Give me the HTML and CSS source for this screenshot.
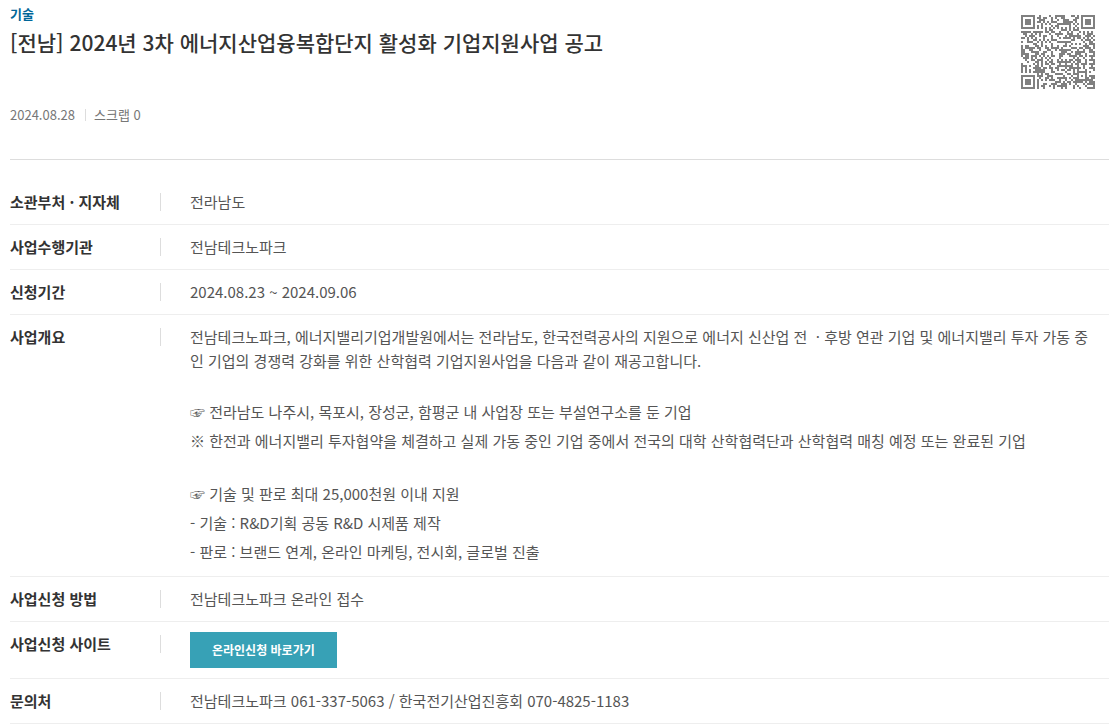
FILE: index.html
```html
<!DOCTYPE html>
<html lang="ko">
<head>
    <meta charset="UTF-8">
    <meta name="viewport" content="width=device-width, initial-scale=1.0">
    <title>2024년 3차 에너지산업융복합단지 활성화 기업지원사업 공고</title>
    <link rel="stylesheet" href="styles.css">
</head>
<body>
    <main class="container">
        <header class="view-head">
            <div class="title-area">
                <span class="category">기술</span>
                <h1 class="title">[전남] 2024년 3차 에너지산업융복합단지 활성화 기업지원사업 공고</h1>
                <div class="info">
                    <span>2024.08.28</span>
                    <span class="scrap">스크랩 0</span>
                </div>
            </div>
            <svg class="qr" viewBox="0 0 37 37" shape-rendering="crispEdges"><path id="qrPath"/></svg>
        </header>
        <dl class="view-list">
            <div class="row">
                <dt>소관부처 · 지자체</dt>
                <dd>전라남도</dd>
            </div>
            <div class="row">
                <dt>사업수행기관</dt>
                <dd>전남테크노파크</dd>
            </div>
            <div class="row">
                <dt>신청기간</dt>
                <dd>2024.08.23 ~ 2024.09.06</dd>
            </div>
            <div class="row">
                <dt>사업개요</dt>
                <dd>
                    <p>전남테크노파크, 에너지밸리기업개발원에서는 전라남도, 한국전력공사의 지원으로 에너지 신산업 전 &nbsp;· 후방 연관 기업 및 에너지밸리 투자 가동 중인 기업의 경쟁력 강화를 위한 산학협력 기업지원사업을 다음과 같이 재공고합니다.</p>
                    <p class="detail">☞ 전라남도 나주시, 목포시, 장성군, 함평군 내 사업장 또는 부설연구소를 둔 기업<br>※ 한전과 에너지밸리 투자협약을 체결하고 실제 가동 중인 기업 중에서 전국의 대학 산학협력단과 산학협력 매칭 예정 또는 완료된 기업</p>
                    <p class="detail">☞ 기술 및 판로 최대 25,000천원 이내 지원<br>- 기술 : R&amp;D기획 공동 R&amp;D 시제품 제작<br>- 판로 : 브랜드 연계, 온라인 마케팅, 전시회, 글로벌 진출</p>
                </dd>
            </div>
            <div class="row">
                <dt>사업신청 방법</dt>
                <dd>전남테크노파크 온라인 접수</dd>
            </div>
            <div class="row">
                <dt>사업신청 사이트</dt>
                <dd><a href="#" class="btn">온라인신청 바로가기</a></dd>
            </div>
            <div class="row">
                <dt>문의처</dt>
                <dd>전남테크노파크 061-337-5063 / 한국전기산업진흥회 070-4825-1183</dd>
            </div>
        </dl>
    </main>
    <script src="qr.js"></script>
</body>
</html>
```

FILE: styles.css
```css
* {
    box-sizing: border-box;
}
body {
    margin: 0;
    background: #fff;
    color: #555;
    font-family: "Noto Sans CJK KR", "Noto Sans", sans-serif;
    font-size: 15px;
    line-height: 24px;
}
.container {
    padding-left: 10px;
}
.view-head {
    display: flex;
    justify-content: space-between;
    align-items: flex-start;
    padding: 4px 14px 32px 0;
    border-bottom: 1px solid #ddd;
}
.title-area {
    display: flex;
    flex-direction: column;
}
.category {
    color: #006699;
    font-size: 13px;
    font-weight: 700;
    line-height: 20px;
}
.title {
    margin: 4px 0 47px;
    color: #333;
    font-size: 21px;
    font-weight: 500;
    line-height: 28px;
}
.info {
    display: flex;
    align-items: center;
    gap: 10px;
    color: #777;
    font-size: 13px;
}
.scrap {
    display: flex;
    align-items: center;
    gap: 8px;
}
.scrap::before {
    content: "";
    width: 1px;
    height: 12px;
    background: #ddd;
}
.qr {
    flex: none;
    width: 74px;
    height: 74px;
    margin-top: 11px;
    fill: #808080;
}
.view-list {
    margin: 20px 0 0;
}
.row {
    display: grid;
    grid-template-columns: 150px 1fr;
    padding: 10px 0;
    border-bottom: 1px solid #eee;
}
dt {
    display: flex;
    align-items: center;
    justify-content: space-between;
    height: 24px;
    color: #333;
    font-weight: 700;
}
dt::after {
    content: "";
    width: 1px;
    height: 18px;
    margin-right: -1px;
    background: #ddd;
}
dd {
    margin: 0;
    padding: 0 14px 0 30px;
}
dd p {
    margin: 0;
    word-break: break-all;
}
dd .detail {
    margin-top: 24px;
    line-height: 29px;
}
.btn {
    display: block;
    width: fit-content;
    padding: 0 22px;
    background: #37a1b6;
    color: #fff;
    font-size: 12px;
    font-weight: 700;
    line-height: 36px;
    text-decoration: none;
}
```

FILE: qr.js
```js
// QR code, version 5, level L, byte mode
const url = "https://www.bizinfo.go.kr/web/lay1/bbs/S1T122C128/AS/74/view.do?pblancId=PBLN_000000000100834";
const size = 37;
const dataLen = 108;
const ecLen = 26;

function mul(a, b) {
    let r = 0;
    for (let i = 7; i >= 0; i--) {
        r = (r << 1) ^ ((r >> 7) * 0x11d);
        r ^= ((b >> i) & 1) * a;
    }
    return r;
}

function codewords(text) {
    let bits = "0100" + text.length.toString(2).padStart(8, "0");
    for (const c of text) bits += c.charCodeAt(0).toString(2).padStart(8, "0");
    bits += "0000";
    const data = bits.match(/.{8}/g).map(b => parseInt(b, 2));
    for (let pad = 0xec; data.length < dataLen; pad ^= 0xfd) data.push(pad);

    const gen = new Array(ecLen).fill(0);
    gen[ecLen - 1] = 1;
    let root = 1;
    for (let i = 0; i < ecLen; i++) {
        for (let j = 0; j < ecLen; j++) {
            gen[j] = mul(gen[j], root);
            if (j + 1 < ecLen) gen[j] ^= gen[j + 1];
        }
        root = mul(root, 2);
    }
    const ec = new Array(ecLen).fill(0);
    for (const b of data) {
        const f = b ^ ec.shift();
        ec.push(0);
        gen.forEach((g, i) => ec[i] ^= mul(g, f));
    }
    return data.concat(ec);
}

// mask 2: every third column is flipped
const mask = 2;

function build(words) {
    const m = Array.from({ length: size }, () => new Array(size).fill(null));
    const set = (x, y, v) => {
        if (x >= 0 && y >= 0 && x < size && y < size) m[y][x] = v ? 1 : 0;
    };
    // timing
    for (let i = 0; i < size; i++) {
        set(6, i, i % 2 == 0);
        set(i, 6, i % 2 == 0);
    }
    // finders
    for (const [cx, cy] of [[3, 3], [size - 4, 3], [3, size - 4]]) {
        for (let dy = -4; dy <= 4; dy++) {
            for (let dx = -4; dx <= 4; dx++) {
                const d = Math.max(Math.abs(dx), Math.abs(dy));
                set(cx + dx, cy + dy, d != 2 && d != 4);
            }
        }
    }
    // alignment
    for (let dy = -2; dy <= 2; dy++) {
        for (let dx = -2; dx <= 2; dx++) {
            set(30 + dx, 30 + dy, Math.max(Math.abs(dx), Math.abs(dy)) != 1);
        }
    }
    // format bits
    let rem = 8 | mask;
    for (let i = 0; i < 10; i++) rem = (rem << 1) ^ ((rem >> 9) * 0x537);
    const format = ((8 | mask) << 10 | rem) ^ 0x5412;
    const bit = i => (format >> i) & 1;
    for (let i = 0; i < 6; i++) set(8, i, bit(i));
    set(8, 7, bit(6));
    set(8, 8, bit(7));
    set(7, 8, bit(8));
    for (let i = 9; i < 15; i++) set(14 - i, 8, bit(i));
    for (let i = 0; i < 8; i++) set(size - 1 - i, 8, bit(i));
    for (let i = 8; i < 15; i++) set(8, size - 15 + i, bit(i));
    set(8, size - 8, 1);

    let n = 0;
    for (let right = size - 1; right >= 1; right -= 2) {
        if (right == 6) right = 5;
        for (let v = 0; v < size; v++) {
            for (let j = 0; j < 2; j++) {
                const x = right - j;
                const y = ((right + 1) & 2) == 0 ? size - 1 - v : v;
                if (m[y][x] !== null) continue;
                const b = n < words.length * 8 ? (words[n >> 3] >> (7 - (n & 7))) & 1 : 0;
                m[y][x] = b ^ (x % 3 == 0 ? 1 : 0);
                n++;
            }
        }
    }
    return m;
}

let path = "";
build(codewords(url)).forEach((row, y) => row.forEach((v, x) => {
    if (v) path += `M${x} ${y}h1v1h-1z`;
}));
document.getElementById("qrPath").setAttribute("d", path);
```
